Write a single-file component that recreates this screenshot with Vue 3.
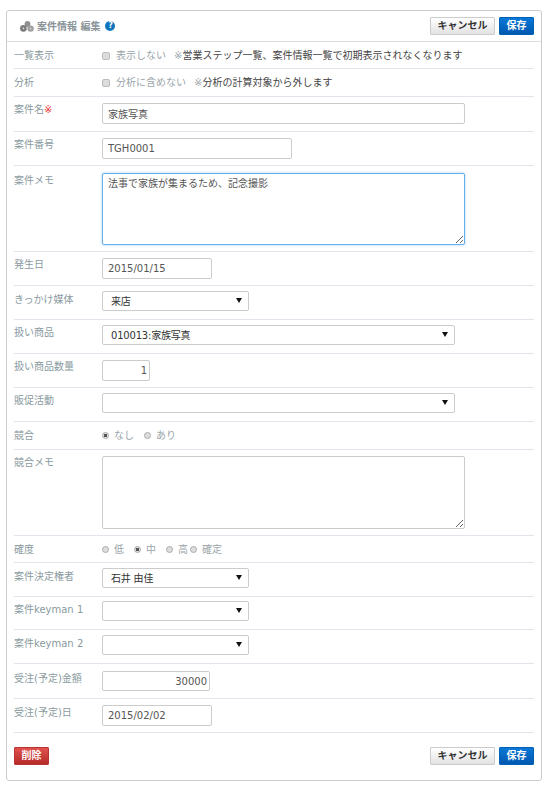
<template>
  <div class="panel">
    <div class="head">
      <div class="title">
        <svg class="title-icon" width="14" height="11" viewBox="0 0 14 11">
          <circle cx="7.5" cy="3" r="2.9" fill="#8f8f8f" />
          <circle cx="3.4" cy="7.4" r="3.3" fill="#7c7c7c" />
          <circle cx="10.6" cy="7.6" r="3.2" fill="#a0a0a0" />
          <circle cx="3.4" cy="7.4" r="0.8" fill="#ddd" />
          <circle cx="10.6" cy="7.6" r="0.8" fill="#ddd" />
        </svg>
        <span>案件情報 編集</span>
        <span class="help">?</span>
      </div>
      <div class="actions">
        <button class="btn cancel">キャンセル</button>
        <button class="btn save">保存</button>
      </div>
    </div>

    <div class="row tight">
      <label class="lbl">一覧表示</label>
      <div class="val">
        <input type="checkbox" class="check" />
        <span class="opt">表示しない</span>
        <span class="note"><em>※</em>営業ステップ一覧、案件情報一覧で初期表示されなくなります</span>
      </div>
    </div>
    <div class="row text">
      <label class="lbl">分析</label>
      <div class="val">
        <input type="checkbox" class="check" />
        <span class="opt">分析に含めない</span>
        <span class="note"><em>※</em>分析の計算対象から外します</span>
      </div>
    </div>
    <div class="row tall">
      <label class="lbl up">案件名<i>※</i></label>
      <input class="field w363" value="家族写真" />
    </div>
    <div class="row">
      <label class="lbl up">案件番号</label>
      <input class="field w190" value="TGH0001" />
    </div>
    <div class="row">
      <label class="lbl down">案件メモ</label>
      <textarea class="field area focus">法事で家族が集まるため、記念撮影</textarea>
    </div>
    <div class="row">
      <label class="lbl up">発生日</label>
      <input class="field w110" value="2015/01/15" />
    </div>
    <div class="row">
      <label class="lbl">きっかけ媒体</label>
      <div class="select w147"><select><option>来店</option></select></div>
    </div>
    <div class="row">
      <label class="lbl up">扱い商品</label>
      <div class="select w353"><select><option>010013:家族写真</option></select></div>
    </div>
    <div class="row">
      <label class="lbl up">扱い商品数量</label>
      <input class="field w48 num" value="1" />
    </div>
    <div class="row">
      <label class="lbl up">販促活動</label>
      <div class="select w353"><select><option></option></select></div>
    </div>
    <div class="row text">
      <label class="lbl">競合</label>
      <div class="val radios">
        <label class="radio"><input type="radio" name="comp" checked />なし</label>
        <label class="radio"><input type="radio" name="comp" />あり</label>
      </div>
    </div>
    <div class="row">
      <label class="lbl up">競合メモ</label>
      <textarea class="field area plain"></textarea>
    </div>
    <div class="row tight">
      <label class="lbl">確度</label>
      <div class="val radios">
        <label class="radio"><input type="radio" name="prob" />低</label>
        <label class="radio"><input type="radio" name="prob" checked />中</label>
        <label class="radio"><input type="radio" name="prob" />高</label>
        <label class="radio last"><input type="radio" name="prob" />確定</label>
      </div>
    </div>
    <div class="row">
      <label class="lbl">案件決定権者</label>
      <div class="select w147"><select><option>石井 由佳</option></select></div>
    </div>
    <div class="row short">
      <label class="lbl">案件keyman 1</label>
      <div class="select w147"><select><option></option></select></div>
    </div>
    <div class="row">
      <label class="lbl">案件keyman 2</label>
      <div class="select w147"><select><option></option></select></div>
    </div>
    <div class="row tall">
      <label class="lbl down">受注(予定)金額</label>
      <input class="field w108 num low" value="30000" />
    </div>
    <div class="row">
      <label class="lbl">受注(予定)日</label>
      <input class="field w110" value="2015/02/02" />
    </div>

    <div class="foot">
      <button class="btn danger">削除</button>
      <div class="actions">
        <button class="btn cancel">キャンセル</button>
        <button class="btn save">保存</button>
      </div>
    </div>
  </div>
</template>

<script setup>
</script>

<style scoped>
.panel {
  box-sizing: border-box;
  width: 536px;
  height: 771px;
  margin: 10px 0 0 6px;
  padding: 0 7px;
  background: #fff;
  border: 1px solid #ccc;
  border-radius: 3px;
  font: 10px/15px "DejaVu Sans", "Noto Sans CJK JP", sans-serif;
  color: #555;
}

.head {
  display: flex;
  align-items: center;
  justify-content: space-between;
  height: 30px;
  margin: 0 -7px;
  padding: 0 7px;
  border-bottom: 1px solid #ddd;
}

.title {
  display: flex;
  align-items: center;
  padding-left: 6px;
  font-weight: bold;
  color: #8a9499;
}

.title-icon {
  margin-right: 3px;
}

.help {
  width: 10px;
  height: 10px;
  margin-left: 5px;
  border-radius: 50%;
  background: #0f75bc;
  color: #fff;
  font-size: 8px;
  line-height: 10px;
  text-align: center;
}

.actions {
  display: flex;
  gap: 4px;
}

.btn {
  height: 18px;
  padding: 0;
  border: 1px solid #ccc;
  border-radius: 1px;
  font: bold 10px/16px "DejaVu Sans", "Noto Sans CJK JP", sans-serif;
}

.cancel {
  width: 65px;
  background: linear-gradient(#fff, #e2e2e2);
  color: #333;
}

.save {
  width: 35px;
  border-color: #0060b6;
  background: linear-gradient(#0a78d8, #0058b0);
  color: #fff;
}

.danger {
  width: 35px;
  border-color: #b33;
  background: linear-gradient(#e0524e, #b52b27);
  color: #fff;
}

.row {
  display: flex;
  align-items: flex-start;
  padding: 6px 0;
  border-bottom: 1px solid #dfe5ea;
}

.row.tall {
  padding-bottom: 7px;
}

.row.short {
  padding-top: 5px;
}

.row.text {
  height: 15px;
}

.row.tight {
  height: 14px;
}

.lbl {
  flex: none;
  width: 88px;
  color: #8a9aa0;
  white-space: nowrap;
}

.lbl.up {
  margin-top: -1px;
}

.lbl.down {
  margin-top: 1px;
}

.lbl i {
  color: #e33;
  font-style: normal;
}

.val {
  display: flex;
  align-items: center;
  color: #9aa5aa;
}

.check {
  appearance: none;
  box-sizing: border-box;
  width: 8px;
  height: 8px;
  margin: 0 6px 0 0;
  border: 1px solid #bbb;
  border-radius: 2px;
  background: #ddd;
}

.opt {
  margin-right: 8px;
}

.note {
  color: #444;
}

.note em {
  color: #9aa5aa;
  font-style: normal;
}

.radios {
  gap: 10px;
}

.radio {
  display: flex;
  align-items: center;
}

.radio.last {
  margin-left: -8px;
}

.radio input {
  appearance: none;
  box-sizing: border-box;
  width: 7px;
  height: 7px;
  margin: 0 5px 0 0;
  border: 1px solid #aaa;
  border-radius: 50%;
  background: #ddd;
}

.radio input:checked {
  background: radial-gradient(circle, #555 0 1.6px, #ddd 2px);
}

.field {
  box-sizing: border-box;
  height: 21px;
  margin: 0;
  padding: 0 5px;
  border: 1px solid #ccc;
  border-radius: 2px;
  outline: none;
  background: #fff;
  font: 10px/15px "DejaVu Sans", "Noto Sans CJK JP", sans-serif;
  color: #555;
}

.low {
  height: 20px;
  margin-top: 1px;
}

.area {
  display: block;
  width: 363px;
  height: 72px;
  margin-top: 1px;
  padding: 2px 5px;
}

.area.plain {
  height: 73px;
  margin-top: 0;
}

.focus {
  border-color: #66afe9;
  box-shadow: 0 0 3px rgba(102, 175, 233, 0.6);
}

.num {
  text-align: right;
  padding-right: 2px;
}

.w363 { width: 363px; }
.w190 { width: 190px; }
.w110 { width: 110px; }
.w108 { width: 108px; }
.w48 { width: 48px; }
.w147 { width: 147px; }
.w353 { width: 353px; }

.select {
  position: relative;
  height: 20px;
  margin-top: -1px;
  margin-bottom: 2px;
}

.select select {
  box-sizing: border-box;
  width: 100%;
  height: 100%;
  padding: 0 5px 0 8px;
  appearance: none;
  border: 1px solid #ccc;
  border-radius: 2px;
  background: #fff;
  font: 10px "DejaVu Sans", "Noto Sans CJK JP", sans-serif;
  letter-spacing: -0.2px;
  color: #333;
}

.select::after {
  content: "";
  position: absolute;
  right: 7px;
  top: 7px;
  border-top: 5px solid #111;
  border-left: 3px solid transparent;
  border-right: 3px solid transparent;
}

.foot {
  display: flex;
  align-items: center;
  justify-content: space-between;
  padding-top: 14px;
}
</style>
